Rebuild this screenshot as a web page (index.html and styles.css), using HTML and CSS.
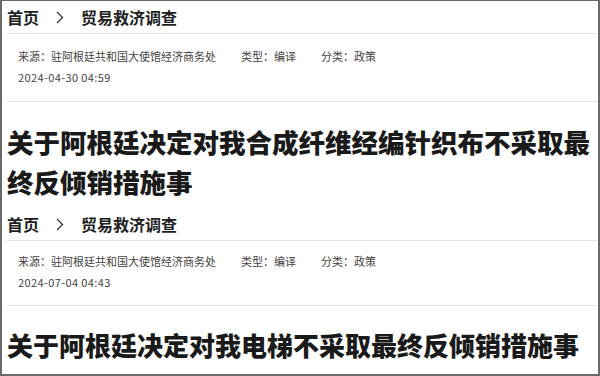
FILE: index.html
```html
<!DOCTYPE html>
<html lang="zh-CN">
<head>
<meta charset="utf-8">
<title>贸易救济调查</title>
<link rel="stylesheet" href="styles.css">
</head>
<body>
<div class="frame">
  <article class="article">
    <nav class="crumb">
      <span class="crumb-item">首页</span>
      <svg class="crumb-sep" width="8" height="13" viewBox="0 0 8 13"><polyline points="1,1 6.5,6.5 1,12" fill="none" stroke="#333" stroke-width="1.3"/></svg>
      <span class="crumb-item">贸易救济调查</span>
    </nav>
    <div class="meta">
      <div class="meta-row">
        <span>来源：驻阿根廷共和国大使馆经济商务处</span>
        <span>类型：编译</span>
        <span>分类：政策</span>
      </div>
      <div class="meta-date">2024-04-30 04:59</div>
    </div>
    <h1 class="title">关于阿根廷决定对我合成纤维经编针织布不采取最终反倾销措施事</h1>
  </article>
  <article class="article article-second">
    <nav class="crumb">
      <span class="crumb-item">首页</span>
      <svg class="crumb-sep" width="8" height="13" viewBox="0 0 8 13"><polyline points="1,1 6.5,6.5 1,12" fill="none" stroke="#333" stroke-width="1.3"/></svg>
      <span class="crumb-item">贸易救济调查</span>
    </nav>
    <div class="meta">
      <div class="meta-row">
        <span>来源：驻阿根廷共和国大使馆经济商务处</span>
        <span>类型：编译</span>
        <span>分类：政策</span>
      </div>
      <div class="meta-date">2024-07-04 04:43</div>
    </div>
    <h1 class="title">关于阿根廷决定对我电梯不采取最终反倾销措施事</h1>
  </article>
</div>
</body>
</html>
```

FILE: styles.css
```css
html, body {
  margin: 0;
  padding: 0;
  background: #fff;
}
body {
  font-family: "Noto Sans CJK SC", "Noto Sans", sans-serif;
  color: #222;
}
.frame {
  box-sizing: border-box;
  width: 600px;
  height: 376px;
  overflow: hidden;
  border-top: 1px solid #6a6a6a;
  border-left: 2px solid #6a6a6a;
  border-right: 2px solid #6a6a6a;
  border-bottom: 2px solid #6a6a6a;
  padding-left: 5px;
}
.crumb {
  height: 32px;
  display: flex;
  align-items: center;
  border-bottom: 1px solid #e4e4e4;
  font-size: 16px;
  font-weight: 700;
  color: #1e1e1e;
  line-height: 1;
}
.crumb-sep {
  margin: 0 17px 0 17px;
}
.meta {
  padding: 12px 0 14px 11px;
  border-bottom: 1px solid #e4e4e4;
  font-size: 11px;
  color: #444;
  line-height: 20px;
}
.meta-row {
  display: flex;
  gap: 25px;
}
.meta-date {
  margin-top: 1px;
  letter-spacing: 0.4px;
}
.title {
  margin: 0;
  padding: 20px 0 6px 0;
  font-size: 26.5px;
  font-weight: 900;
  line-height: 40px;
  color: #1a1a1a;
  letter-spacing: 0;
}
.article-second .meta {
  padding-top: 10px;
  padding-bottom: 13px;
}
.article-second .title {
  padding-top: 19px;
  font-size: 26px;
}
```
